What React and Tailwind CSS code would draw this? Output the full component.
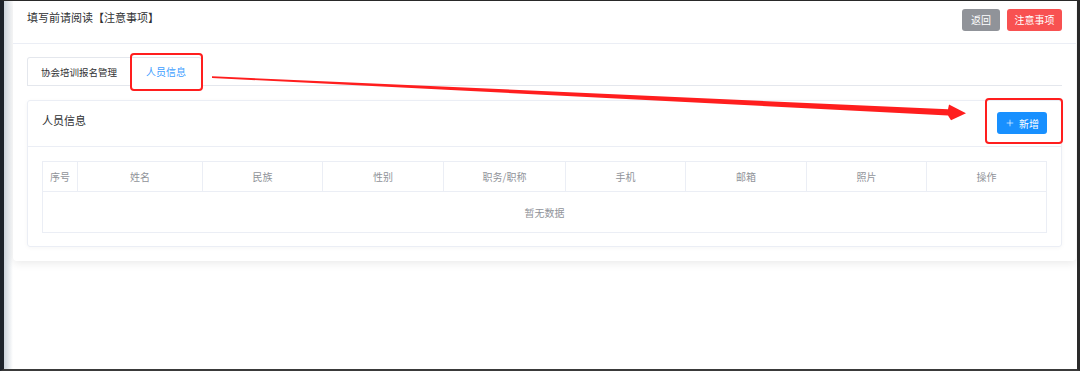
import React from 'react';
import { Plus } from 'lucide-react';

const columns = [
  { label: '序号' },
  { label: '姓名' },
  { label: '民族' },
  { label: '性别' },
  { label: '职务/职称' },
  { label: '手机' },
  { label: '邮箱' },
  { label: '照片' },
  { label: '操作' },
];

const font = { fontFamily: '"Noto Sans CJK SC", "Noto Sans", sans-serif' };

const App = () => {
  return (
    <div className="relative w-[1080px] h-[371px] overflow-hidden bg-white" style={font}>
      {/* screenshot frame */}
      <div className="flex h-full border-t border-b-2 border-r-[3px] border-l-4 border-t-[#2a2a2a] border-b-[#3a3a3a] border-r-[#2a2a2a] border-l-[#1d232b] bg-white">
        <div className="w-[9px] shrink-0 bg-gradient-to-r from-[#cbd3db] to-white" />

        <div className="flex-1 mr-[1px]">
          {/* main card */}
          <div className="bg-white rounded-b-[4px] shadow-[0_2px_10px_rgba(0,0,0,0.09)]">
            {/* card header */}
            <div className="h-[43px] px-[14px] flex justify-between items-start border-b border-[#ebeef5]">
              <div className="pt-[9px] leading-[14px] text-[11px] text-[#303133]">填写前请阅读【注意事项】</div>
              <div className="flex gap-[7px] mt-[8px]">
                <button className="h-[22px] w-[38px] rounded-[3px] bg-[#909399] text-white text-[10px] leading-[22px]">返回</button>
                <button className="h-[22px] w-[55px] rounded-[3px] bg-[#f85151] text-white text-[10px] leading-[22px]">注意事项</button>
              </div>
            </div>

            <div className="px-[14px] pt-[13px] pb-[14px]">
              {/* tabs */}
              <div className="flex border-b border-[#e4e7ed]">
                <div className="flex border-t border-l border-r border-[#e4e7ed] rounded-t-[3px] -mb-px">
                  <div className="h-[28px] px-[13px] leading-[28px] text-[9.5px] text-[#303133] border-b border-[#e4e7ed]">协会培训报名管理</div>
                  <div className="relative h-[28px] px-[15px] leading-[28px] text-[10px] text-[#409eff] border-l border-b border-l-[#e4e7ed] border-b-white">
                    人员信息
                    <div className="absolute left-[-1px] right-[-2px] top-[-5px] bottom-[-6px] border-[2.5px] border-[#ff1e1e] rounded-[4px]" />
                  </div>
                </div>
              </div>

              {/* panel */}
              <div className="mt-[14px] border border-[#ebeef5] rounded-[3px] shadow-[0_1px_4px_rgba(0,0,0,0.04)]">
                <div className="h-[46px] px-[14px] flex justify-between items-start border-b border-[#ebeef5]">
                  <div className="pt-[12px] leading-[14px] text-[11px] text-[#303133]">人员信息</div>
                  <div className="relative mt-[11px]">
                    <button className="h-[22px] w-[50px] rounded-[3px] bg-[#1890ff] text-white text-[10px] flex items-center justify-center gap-[4px]">
                      <Plus size={10} strokeWidth={1.6} />
                      <span>新增</span>
                    </button>
                    <div className="absolute left-[-12px] right-[-16px] top-[-14px] bottom-[-10px] border-[2.5px] border-[#ff1e1e] rounded-[4px]" />
                  </div>
                </div>

                <div className="px-[14px] pt-[14px] pb-[13px]">
                  <div className="border border-[#ebeef5]">
                    <div className="grid grid-cols-[35px_125px_120px_121px_122px_120px_121px_120px_1fr] border-b border-[#ebeef5]">
                      {columns.map((col, i) => (
                        <div
                          key={col.label}
                          className={`h-[29px] flex items-center justify-center text-[10px] text-[#909399] ${i < columns.length - 1 ? 'border-r border-[#ebeef5]' : ''}`}
                        >
                          {col.label}
                        </div>
                      ))}
                    </div>
                    <div className="h-[40px] flex items-center justify-center text-[10px] text-[#909399]">暂无数据</div>
                  </div>
                </div>
              </div>
            </div>
          </div>
        </div>
      </div>

      {/* annotation arrow */}
      <svg className="absolute top-0 left-0 pointer-events-none" width="1080" height="371" viewBox="0 0 1080 371">
        <polygon
          points="212,76.3 948,109.2 949,104.5 966,113.3 951,120.2 948,115.4 212,77.9"
          fill="#ff1e1e"
        />
      </svg>
    </div>
  );
};

export default App;
